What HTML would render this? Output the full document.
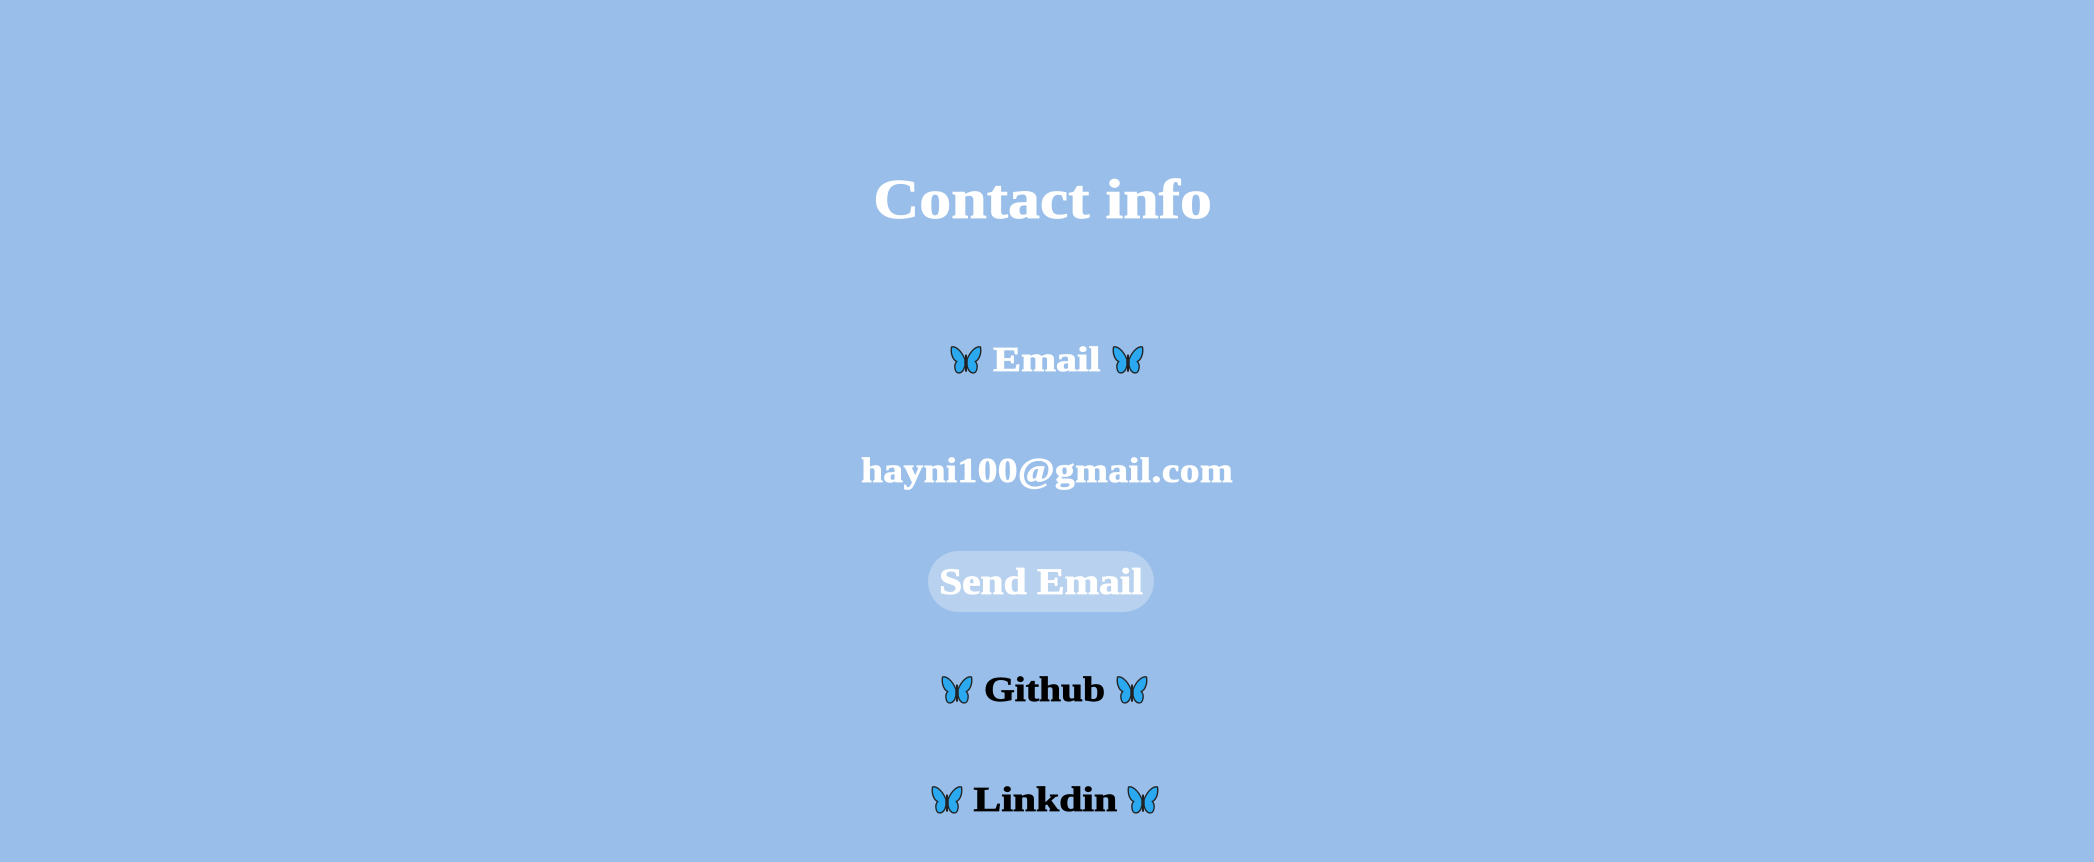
<!DOCTYPE html>
<html><head><meta charset="utf-8"><style>
html,body{margin:0;padding:0;width:2094px;height:862px;background:#98bee9;overflow:hidden}
body{font-family:"Liberation Serif",serif;font-weight:bold;position:relative}
.r{position:absolute;left:0;width:2094px;text-align:center;white-space:nowrap}
.w{color:#fff;-webkit-text-stroke:0.8px #fff}
.k{color:#000;-webkit-text-stroke:0.8px #000}
.t{display:inline-block}
svg{vertical-align:-3px;margin:0 8px}
.btn{display:inline-block;background:rgba(255,255,255,0.3);border-radius:31px;height:61px;width:226px;line-height:63px;font-size:37px;color:#fff}
</style></head><body>
<svg width="0" height="0" style="position:absolute"><defs>
<g id="b">
<path d="M14 14 C10 4 4 1 1 2 C0 8 2 14 6 16 C3 19 4 27 8 27 C11 27 13 24 14 20Z" fill="#2aa8f0" stroke="#222" stroke-width="1.3"/>
<path d="M16 14 C20 4 26 1 29 2 C30 8 28 14 24 16 C27 19 26 27 22 27 C19 27 17 24 16 20Z" fill="#2aa8f0" stroke="#222" stroke-width="1.3"/>
<rect x="14" y="9" width="2" height="17" rx="1" fill="#222"/>
</g></defs></svg>
<div class="r w" style="top:168px;font-size:56px;left:-4px"><span class="t" style="transform:scaleX(1.14)">Contact info</span></div>
<div class="r w" style="top:340px;font-size:35px"><svg width="32" height="29" viewBox="0 0 30 28"><use href="#b"/></svg><span class="t" style="transform:scaleX(1.2);margin:0 12px">Email</span><svg width="32" height="29" viewBox="0 0 30 28"><use href="#b"/></svg></div>
<div class="r w" style="top:451px;font-size:35px;letter-spacing:0.5px"><span class="t" style="transform:scaleX(1.12)">hayni100@gmail.com</span></div>
<div class="r" style="top:551px;left:-6px"><span class="btn w"><span class="t" style="transform:scaleX(1.12)">Send Email</span></span></div>
<div class="r k" style="top:670px;font-size:35px;left:-3px"><svg width="32" height="29" viewBox="0 0 30 28"><use href="#b"/></svg><span class="t" style="transform:scaleX(1.13);margin:0 10px">Github</span><svg width="32" height="29" viewBox="0 0 30 28"><use href="#b"/></svg></div>
<div class="r k" style="top:780px;font-size:35px;left:-2px"><svg width="32" height="29" viewBox="0 0 30 28"><use href="#b"/></svg><span class="t" style="transform:scaleX(1.19);margin:0 14px">Linkdin</span><svg width="32" height="29" viewBox="0 0 30 28"><use href="#b"/></svg></div>
</body></html>
